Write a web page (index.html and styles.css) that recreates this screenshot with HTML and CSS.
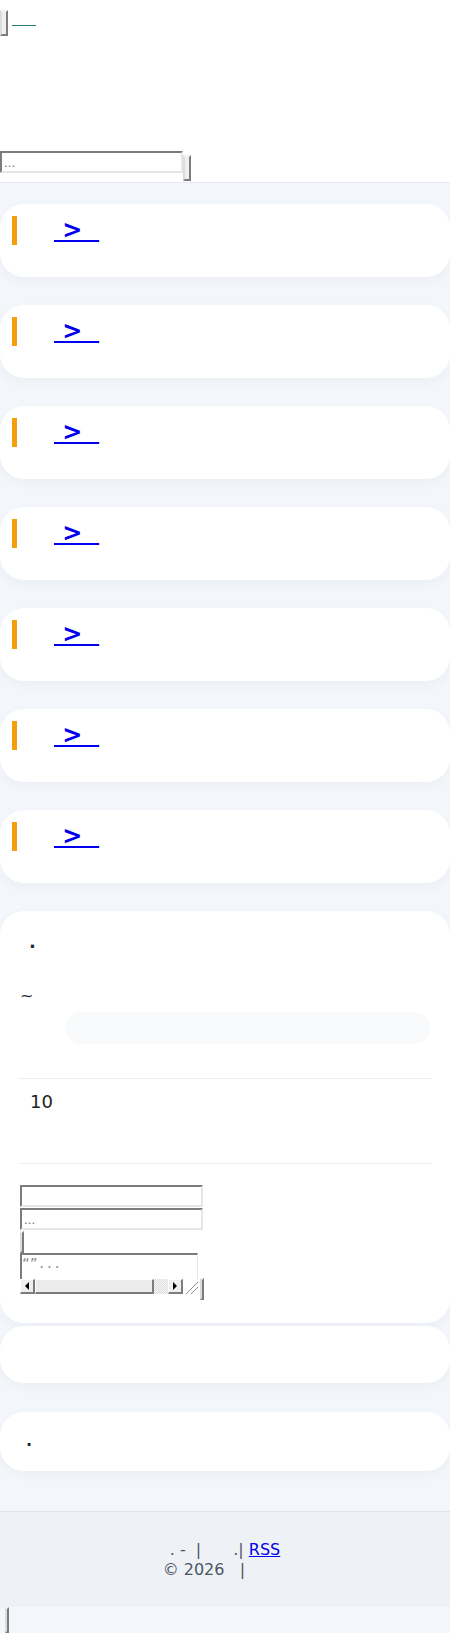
FILE: index.html
```html
<!DOCTYPE html>
<html lang="zh-CN">
<head>
<meta charset="utf-8">
<title>　</title>
<link rel="stylesheet" href="styles.css">
</head>
<body>
<header class="site-header">
  <div class="topbar">
    <button class="menu-btn" type="button"></button>
    <a class="logo" href="#">　　</a>
  </div>
  <nav class="nav">
    <span class="nav-item">　　</span>
    <span class="nav-item">　　</span>
    <span class="nav-item">　　</span>
    <span class="nav-item">　　</span>
    <span class="nav-item">　　</span>
  </nav>
  <form class="search">
    <input class="search-input" type="text" placeholder="...">
    <button class="search-btn" type="submit"></button>
  </form>
</header>

<main class="main">
  <article class="post"><h2 class="post-title"><a href="#">&nbsp;&gt;&nbsp;&nbsp;</a></h2></article>
  <article class="post"><h2 class="post-title"><a href="#">&nbsp;&gt;&nbsp;&nbsp;</a></h2></article>
  <article class="post"><h2 class="post-title"><a href="#">&nbsp;&gt;&nbsp;&nbsp;</a></h2></article>
  <article class="post"><h2 class="post-title"><a href="#">&nbsp;&gt;&nbsp;&nbsp;</a></h2></article>
  <article class="post"><h2 class="post-title"><a href="#">&nbsp;&gt;&nbsp;&nbsp;</a></h2></article>
  <article class="post"><h2 class="post-title"><a href="#">&nbsp;&gt;&nbsp;&nbsp;</a></h2></article>
  <article class="post"><h2 class="post-title"><a href="#">&nbsp;&gt;&nbsp;&nbsp;</a></h2></article>

  <section class="panel">
    <h3 class="panel-title">·</h3>
    <p class="range">~</p>
    <ul class="pill-list">
      <li class="pill"></li>
    </ul>
    <hr class="rule">
    <div class="count">
      <div class="count-num">10</div>
      <p class="count-desc">　　　　</p>
    </div>
    <hr class="rule rule-tight">
    <form class="comment-form">
      <input class="field" type="text">
      <input class="field" type="text" placeholder="...">
      <button class="small-btn" type="button"></button>
      <div class="area-row">
        <div class="area-box">
          <textarea class="area" wrap="off">“”...</textarea>
          <div class="hscroll" aria-hidden="true">
            <span class="sb-btn sb-left"></span>
            <span class="sb-thumb"></span>
            <span class="sb-track"></span>
            <span class="sb-btn sb-right"></span>
            <span class="sb-corner"></span>
          </div>
        </div>
        <button class="small-btn send-btn" type="submit"></button>
      </div>
    </form>
  </section>

  <section class="box box-first"><p class="box-text">　　</p></section>
  <section class="box box-last"><p class="box-text dot-text">·</p></section>
</main>

<footer class="site-footer">
  <div class="foot-line">.&nbsp;-&nbsp;&nbsp;|　　.|&nbsp;<a href="#">RSS</a></div>
  <div class="foot-line">©&nbsp;2026&nbsp;&nbsp;&nbsp;|　　&nbsp;&nbsp;</div>
</footer>
<div class="bottom-bar"><button class="top-btn" type="button"></button></div>
</body>
</html>
```

FILE: styles.css
```css
body {
  margin: 0;
  font-family: "DejaVu Sans", "Noto Sans CJK SC", sans-serif;
  background: #f3f6fb;
  color: #1f2937;
}

input,
button,
textarea {
  -webkit-appearance: none;
  appearance: none;
}

input,
textarea {
  border-style: solid;
  border-width: 2px;
  border-color: #7c7c7c #e6e6e6 #e6e6e6 #7c7c7c;
  background: #ffffff;
}

button {
  border-style: solid;
  border-width: 2px;
  border-color: #f4f4f4 #7c7c7c #7c7c7c #dcdcdc;
  background: #efefef;
}

.site-header {
  background: #ffffff;
  border-bottom: 1px solid #e4e8ee;
  padding-top: 10px;
}

.topbar {
  display: flex;
  align-items: flex-start;
  gap: 4px;
}

.menu-btn {
  width: 8px;
  height: 26px;
  padding: 0;
}

.logo {
  font-size: 12px;
  line-height: 14px;
  margin-top: 3px;
  color: #2a7b80;
  white-space: pre;
}

.nav {
  display: flex;
  flex-direction: column;
  font-size: 14px;
  line-height: 23px;
  white-space: pre;
}

.search {
  display: flex;
  align-items: flex-start;
  margin: 0;
  height: 31px;
}

.search-input {
  margin: 0;
  width: 183px;
  height: 22px;
  box-sizing: border-box;
}

.search-btn {
  width: 8px;
  height: 26px;
  padding: 0;
  margin-top: 4px;
}

.main {
  padding: 21px 0 40px;
}

.post {
  background: #ffffff;
  border-radius: 24px;
  padding: 12px 12px 32px;
  margin-bottom: 28px;
  box-shadow: 0 4px 12px rgba(15, 23, 42, 0.035);
}

.post-title {
  margin: 0;
  font-size: 24px;
  line-height: 29px;
  border-left: 5px solid #f59e0b;
  padding-left: 37px;
  white-space: pre;
}

.post-title a {
  color: #0000ee;
}

.panel {
  background: #ffffff;
  border-radius: 24px;
  padding: 20px 18px 23px;
  margin-bottom: 3px;
  box-shadow: 0 4px 12px rgba(15, 23, 42, 0.035);
}

.panel-title {
  margin: 0;
  padding: 4px 0 0 11px;
  font-size: 18px;
  line-height: 23px;
}

.range {
  margin: 26px 0 0;
  font-size: 16px;
  line-height: 24px;
  padding-left: 2px;
}

.pill-list {
  list-style: none;
  margin: 4px 0 0;
  padding: 0 2px 0 47px;
}

.pill {
  height: 32px;
  background: #f8fafc;
  border-radius: 16px;
}

.rule {
  border: 0;
  border-top: 1px solid #eceff3;
  margin: 34px 0 0;
}

.rule-tight {
  margin: 0;
}

.count {
  padding: 9px 12px 0;
}

.count-num {
  font-size: 18px;
  line-height: 27px;
  color: #222222;
}

.count-desc {
  margin: 12px 0;
  font-size: 14px;
  line-height: 24px;
  white-space: pre;
}

.comment-form {
  margin: 0;
  padding: 21px 0 0 2px;
}

.field {
  display: block;
  width: 183px;
  height: 22px;
  box-sizing: border-box;
  margin: 0 0 1px;
}

.small-btn {
  display: block;
  width: 4px;
  height: 22px;
  padding: 0;
}

.area-row {
  display: flex;
  align-items: flex-start;
  gap: 2px;
}

.area-box {
  display: flex;
  flex-direction: column;
  width: 178px;
}

.area {
  display: block;
  margin: 0;
  width: 100%;
  height: 26px;
  box-sizing: border-box;
  border-width: 2px 1px 0 2px;
  padding: 1px 0;
  color: #8a8a8a;
  font-size: 13px;
  resize: none;
  overflow: hidden;
  white-space: pre;
}

.hscroll {
  display: flex;
  height: 15px;
}

.sb-btn {
  display: flex;
  align-items: center;
  justify-content: center;
  width: 15px;
  box-sizing: border-box;
  border-style: solid;
  border-width: 1px 2px 2px 1px;
  border-color: #ffffff #7c7c7c #7c7c7c #ffffff;
  background: #efefef;
}

.sb-btn::before {
  content: "";
  border-top: 4px solid transparent;
  border-bottom: 4px solid transparent;
}

.sb-left::before {
  border-right: 4px solid #000000;
}

.sb-right::before {
  border-left: 4px solid #000000;
}

.sb-thumb {
  width: 119px;
  box-sizing: border-box;
  border-style: solid;
  border-width: 1px 2px 2px 1px;
  border-color: #ffffff #7c7c7c #7c7c7c #ffffff;
  background: #ececec;
}

.sb-track {
  flex: 1;
  background: repeating-conic-gradient(#dcdcdc 0 25%, #f8f8f8 0 50%) 0 0 / 2px 2px;
}

.sb-corner {
  width: 15px;
  background: linear-gradient(135deg, transparent 58%, #8a8a8a 58% 63%, transparent 63% 74%, #8a8a8a 74% 79%, transparent 79%) #ffffff;
}

.send-btn {
  margin-top: 25px;
}

.box {
  background: #ffffff;
  border-radius: 24px;
  padding: 17px 20px;
  box-shadow: 0 4px 12px rgba(15, 23, 42, 0.035);
}

.box-last {
  margin-top: 29px;
  padding: 21px 20px 15px;
}

.box-text {
  margin: 0;
  font-size: 16px;
  line-height: 23px;
  white-space: pre;
}

.dot-text {
  padding-left: 6px;
  font-weight: bold;
}

.site-footer {
  background: #eef2f6;
  border-top: 1px solid #dfe5ec;
  padding: 28px 0 27px;
  text-align: center;
  font-size: 16px;
  line-height: 20px;
  color: #4b5563;
}

.foot-line {
  white-space: pre;
}

.site-footer a {
  color: #0000ee;
}

.bottom-bar {
  height: 26px;
  padding-left: 5px;
}

.top-btn {
  display: block;
  width: 4px;
  height: 26px;
  padding: 0;
}
```
